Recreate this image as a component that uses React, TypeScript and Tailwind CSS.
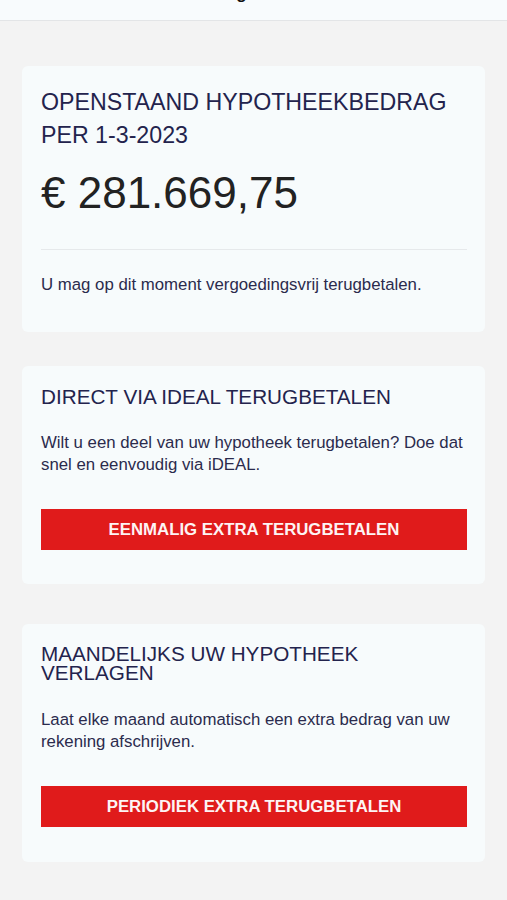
import React from "react";

const font = { fontFamily: '"Liberation Sans", Arial, sans-serif' };

const RepayCard: React.FC<{
  title: string;
  titleClass: string;
  text: string;
  textMargin: string;
  button: string;
  className: string;
}> = ({ title, titleClass, text, textMargin, button, className }) => (
  <section className={`rounded-md bg-[#f7fbfc] pl-[19px] pr-[18px] pt-5 ${className}`}>
    <h2 className={`text-[20.7px] text-[#23234d] uppercase ${titleClass}`}>{title}</h2>
    <p className={`text-[16.8px] leading-[22px] text-[#2b2b4d] ${textMargin}`}>{text}</p>
    <button className="mt-[33px] h-[41px] w-full bg-[#e01b1b] text-[16.8px] font-bold text-[#fdf4f4] uppercase">
      {button}
    </button>
  </section>
);

export default function App() {
  return (
    <div className="min-h-[900px] bg-[#f3f3f3]" style={font}>
      <header className="h-[21px] overflow-hidden border-b border-[#e3e5e7] bg-[#f8fbfd]">
        <div className="-mt-[19px] text-center text-[17px] leading-[25px] font-bold text-[#111]">Terugbetalen</div>
      </header>

      <main className="flex flex-col px-[22px] pt-[45px]">
        <section className="rounded-md bg-[#f7fbfc] pl-[19px] pr-[18px] pt-5 pb-[36px]">
          <h1 className="text-[23.2px] leading-[33px] text-[#23234d] uppercase">
            Openstaand hypotheekbedrag per 1-3-2023
          </h1>
          <div className="mt-[19px] text-[44px] leading-[43px] text-[#222]">€ 281.669,75</div>
          <hr className="mt-[35px] border-[#e6e9eb]" />
          <p className="mt-6 text-[16.8px] leading-[22px] text-[#2b2b4d]">
            U mag op dit moment vergoedingsvrij terugbetalen.
          </p>
        </section>

        <RepayCard
          className="mt-[34px] pb-[34px]"
          title="Direct via iDEAL terugbetalen"
          titleClass="leading-[22px]"
          text="Wilt u een deel van uw hypotheek terugbetalen? Doe dat snel en eenvoudig via iDEAL."
          textMargin="mt-6"
          button="Eenmalig extra terugbetalen"
        />

        <RepayCard
          className="mt-10 pb-[35px]"
          title="Maandelijks uw hypotheek verlagen"
          titleClass="leading-[19px] pr-[90px]"
          text="Laat elke maand automatisch een extra bedrag van uw rekening afschrijven."
          textMargin="mt-[27px] pr-2"
          button="Periodiek extra terugbetalen"
        />
      </main>
    </div>
  );
}
